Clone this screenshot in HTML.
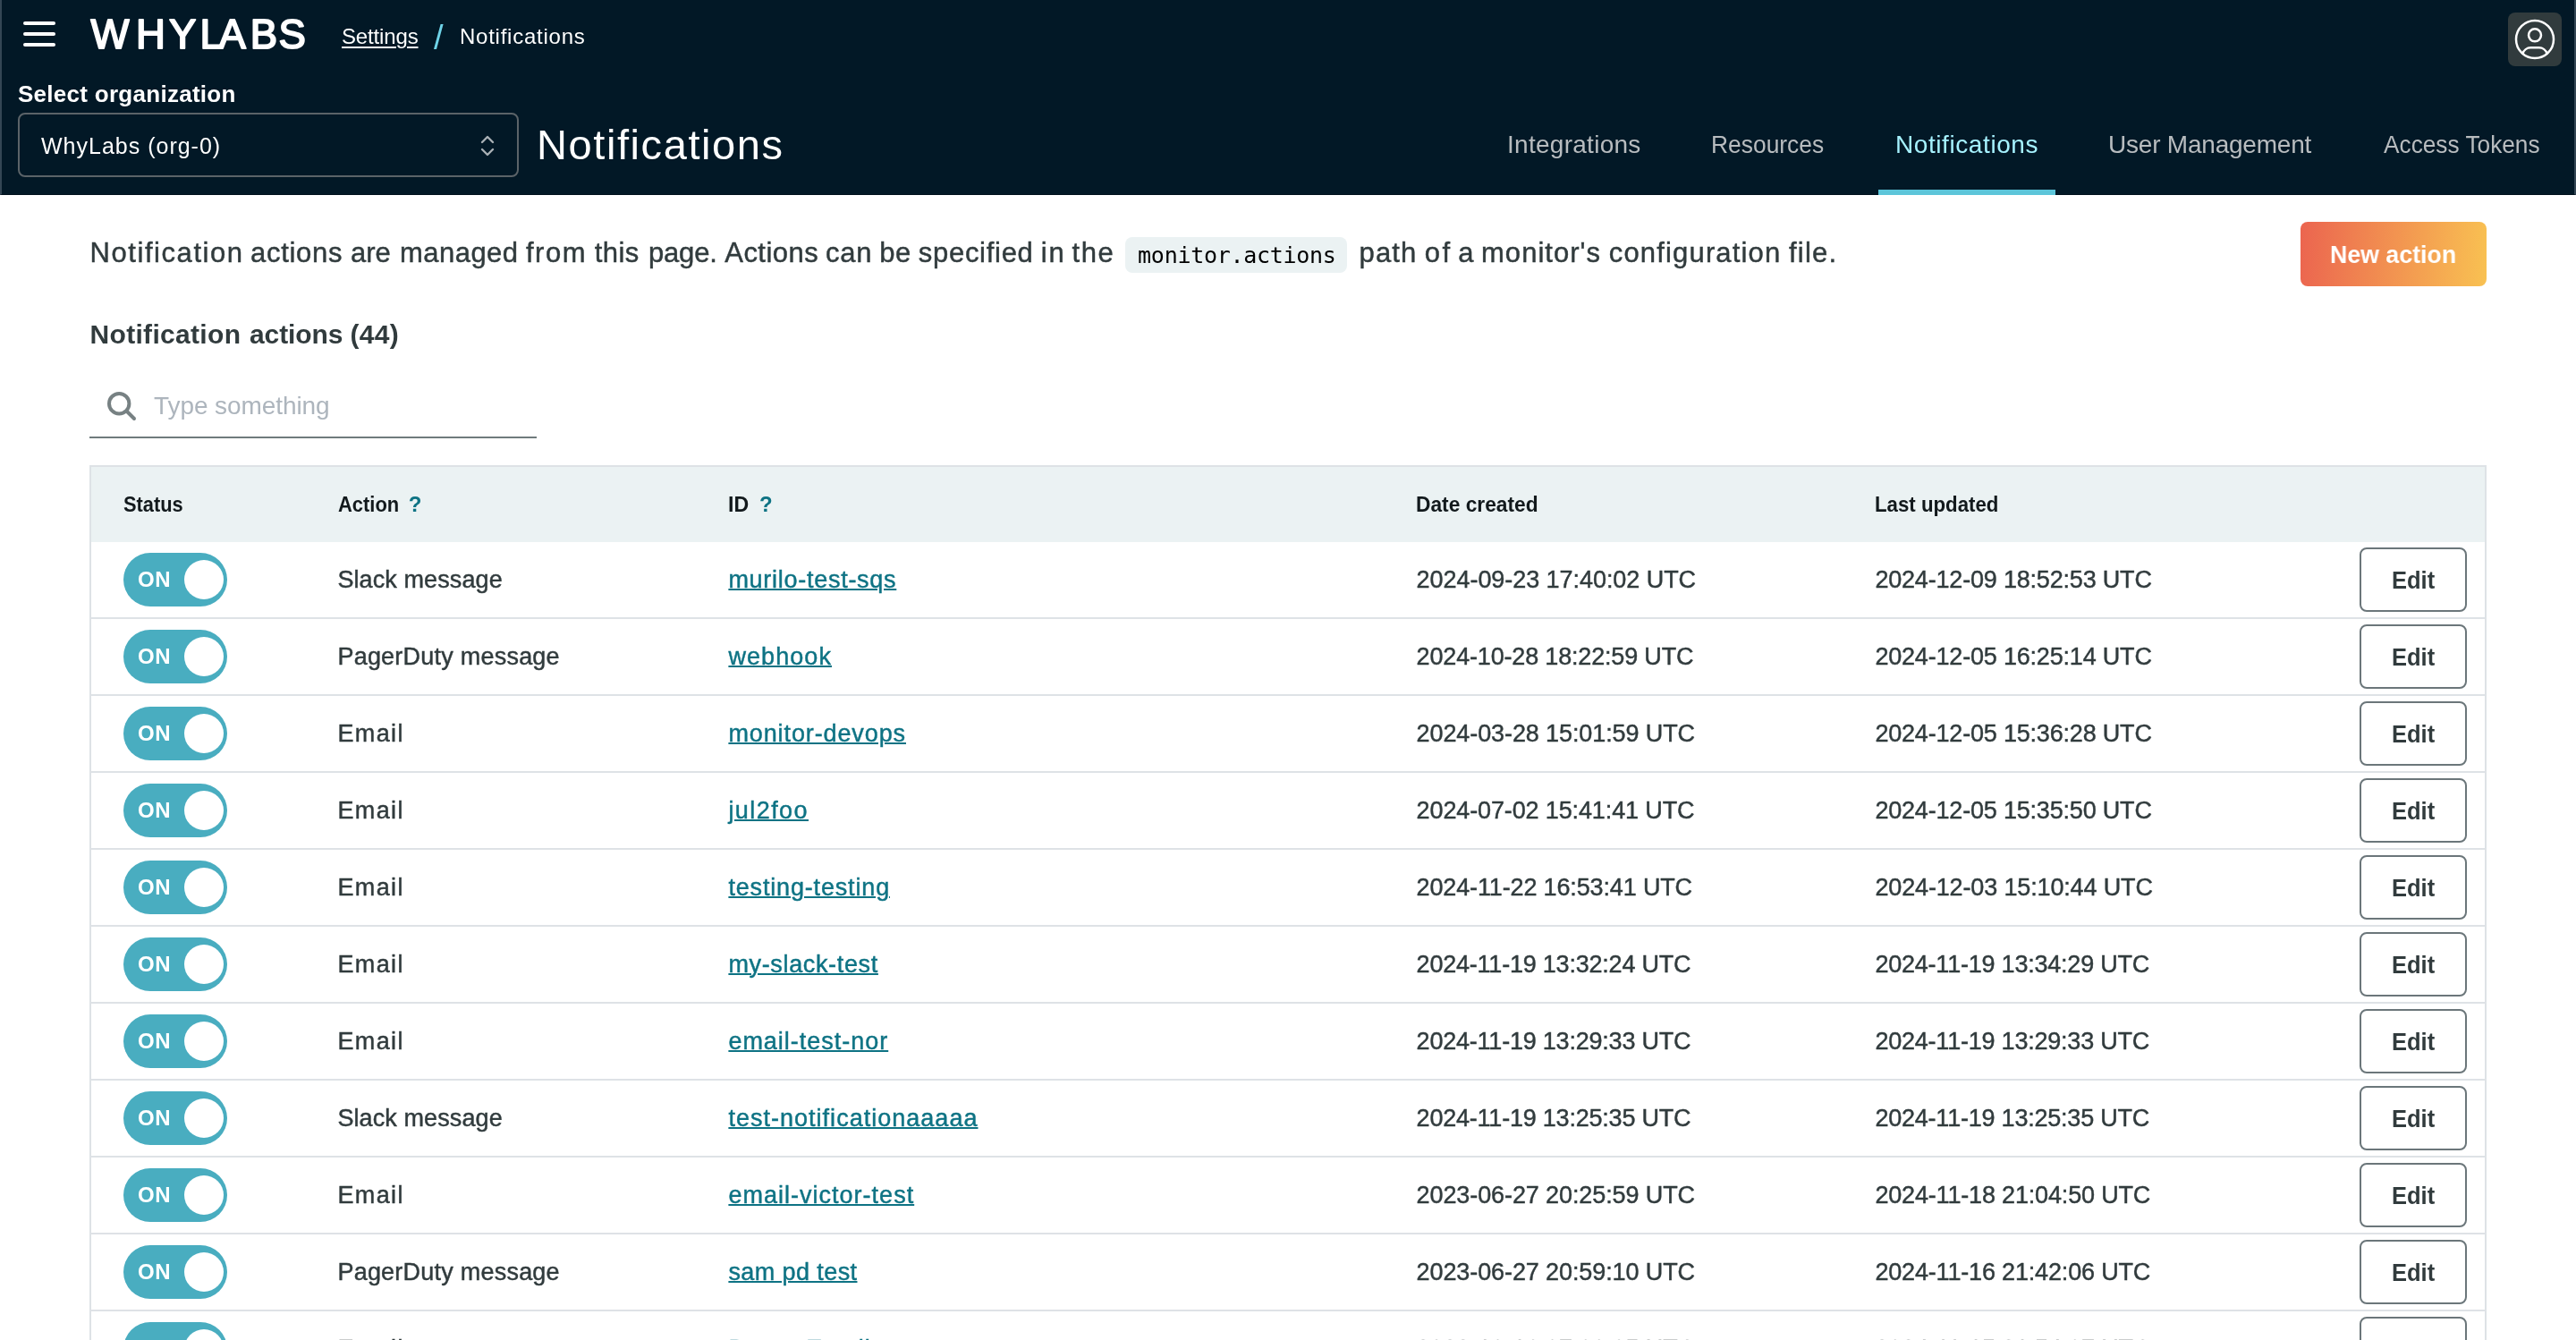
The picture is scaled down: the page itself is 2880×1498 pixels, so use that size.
<!DOCTYPE html><html lang="en"><head><meta charset="utf-8"><title>Notifications | WhyLabs</title><style>
*{box-sizing:border-box}
html,body{margin:0;padding:0}
body{will-change:transform;width:2880px;height:1498px;overflow:hidden;background:#fff;font-family:"Liberation Sans",Arial,sans-serif;color:#313b3d;position:relative}
a{color:inherit}
.abs{position:absolute;white-space:nowrap}
header{position:absolute;left:0;top:0;width:2880px;height:218px;background:#021826;border-left:2px solid #344654;border-right:2px solid #344654;border-bottom:1px solid #000f1c}
header .in{position:absolute;left:-2px;top:0;width:2880px;height:218px}
.burger{position:absolute;left:26px;top:24px;width:36px;height:28px}
.burger i{position:absolute;left:0;width:36px;height:4px;border-radius:2px;background:#fff}
.logo{position:absolute;left:90px;top:10px;width:260px;height:56px}
.crumb{font-size:24px;color:#fff;line-height:30px;top:26px}
.crumb.sep{color:#6fd3e8;font-size:38px;line-height:40px;top:22px}
.orglabel{left:20px;top:89px;font-size:26px;font-weight:700;color:#fff;line-height:32px}
.select{position:absolute;left:20px;top:126px;width:560px;height:72px;border:2px solid #5b6368;border-radius:8px}
.select span{position:absolute;left:24px;top:1px;line-height:68px;font-size:25px;color:#fff;white-space:nowrap}
.select svg{position:absolute;right:24px;top:22px}
h1{margin:0;font-weight:400;font-size:47px;color:#fff;left:600px;top:132px;line-height:60px}
nav a{position:absolute;top:144px;font-size:28px;line-height:36px;color:#b8bcbf;text-decoration:none;white-space:nowrap}
nav a.on{color:#a6f2ff}
nav .bar{position:absolute;left:2100px;top:212px;width:198px;height:6px;background:#5cc5d9}
.avatar{position:absolute;left:2804px;top:14px;width:60px;height:60px;border-radius:8px;background:#313b3d}
.avatar svg{position:absolute;left:2px;top:2px}
.lead{left:100px;top:263px;font-size:31px;line-height:40px;margin:0}
.lead code{position:absolute;left:1158px;top:2px;width:248px;height:40px;line-height:42px;text-align:center;border-radius:8px;background:#ebf2f3;color:#000;font-family:"DejaVu Sans Mono","Liberation Mono",monospace;font-size:25px}
.lead{width:2000px;height:40px;-webkit-text-stroke:0.45px}
.lead code,.edit,.sw{-webkit-text-stroke:0}
.w{position:absolute;left:0;top:0}
h2{width:400px;height:40px}
.newbtn{position:absolute;left:2572px;top:248px;width:208px;height:72px;border-radius:8px;background:linear-gradient(94.15deg,#EA5B4F -10.2%,#F9C452 102.94%);color:#fff;font-weight:700;font-size:28px;line-height:73px;text-align:center}
h2{margin:0;left:100px;top:354px;font-size:30px;font-weight:700;line-height:40px}
.search{position:absolute;left:100px;top:418px;width:500px;height:72px;border-bottom:2px solid #6f7b7d}
.search svg{position:absolute;left:18px;top:18px}
.search span{position:absolute;left:70px;top:18px;font-size:28px;line-height:36px;color:#adb5bd;white-space:nowrap}
table{position:absolute;left:100px;top:520px;width:2680px;border-collapse:separate;border-spacing:0;table-layout:fixed;border:2px solid #dee2e6;border-bottom:0}
th{height:84px;background:#ebf2f3;text-align:left;font-size:24px;font-weight:700;color:#12191c;padding:0;white-space:nowrap}
td{height:86px;border-bottom:2px solid #dee2e6;padding:0;font-size:27px;white-space:nowrap;vertical-align:middle;-webkit-text-stroke:0.45px}
th:first-child,td:first-child{padding-left:36px}
th b{color:#0e7384}
td a{color:#0e7384;text-decoration:underline;text-decoration-thickness:2px;text-underline-offset:1px}
.sw{display:block;position:relative;width:116px;height:60px;border-radius:30px;background:#49adc0}
.sw span{position:absolute;left:16px;top:0;line-height:60px;font-size:24px;font-weight:700;color:#fff}
.sw i{position:absolute;left:68px;top:8px;width:44px;height:44px;border-radius:50%;background:#fff}
.edit{display:block;width:120px;height:72px;border:2px solid #6b767a;border-radius:8px;font-size:28px;font-weight:700;line-height:70px;text-align:center;color:#313b3d;background:#fff}
</style></head><body>
<header><div class="in">
<div class="burger"><i style="top:0"></i><i style="top:12px"></i><i style="top:24px"></i></div>
<svg class="logo" viewBox="90 10 260 56"><text x="101.6 152 189.1 223.4 244.6 279.8 311.4" y="53.5" font-family="Liberation Sans, Arial, sans-serif" font-size="45.5" font-weight="400" fill="#fff" stroke="#fff" stroke-width="1.9" stroke-linejoin="round">WHYLABS</text></svg>
<a class="abs crumb" style="left:381px;text-decoration:underline;text-underline-offset:3px;text-decoration-thickness:2px;letter-spacing:-0.154px;margin-left:1px;margin-right:-0.846px">Settings</a>
<span class="abs crumb sep" style="left:485px;letter-spacing:0px;margin-left:0.0px;margin-right:-0.0px">/</span>
<span class="abs crumb" style="left:513px;letter-spacing:0.75px;margin-left:1.0px;margin-right:-1.75px">Notifications</span>
<label class="abs orglabel" style="letter-spacing:0.278px;margin-left:0.0px;margin-right:-0.278px">Select organization</label>
<div class="select"><span style="letter-spacing:1.0px;margin-left:0.0px;margin-right:-1.0px">WhyLabs (org-0)</span><svg width="18" height="26" viewBox="0 0 18 26" fill="none" stroke="#a9b0b5" stroke-width="2.4" stroke-linecap="round" stroke-linejoin="round"><path d="M3 9l6-6 6 6M3 17l6 6 6-6"/></svg></div>
<h1 class="abs" style="letter-spacing:1.583px;margin-left:0.0px;margin-right:-1.583px">Notifications</h1>
<nav>
<a style="left:1686px;letter-spacing:0.273px;margin-left:-1.0px;margin-right:0.727px">Integrations</a>
<a style="left:1914px;letter-spacing:0px;margin-left:-1.0px;margin-right:1.0px;display:inline-block;transform:scaleX(0.9428);transform-origin:0 50%">Resources</a>
<a class="on" style="left:2119px;letter-spacing:0.583px;margin-left:0.0px;margin-right:-0.583px">Notifications</a>
<a style="left:2357px;letter-spacing:-0.214px;margin-left:0.0px;margin-right:0.214px">User Management</a>
<a style="left:2665px;letter-spacing:0px;margin-left:0.0px;margin-right:-0.0px;display:inline-block;transform:scaleX(0.9375);transform-origin:0 50%">Access Tokens</a>
<div class="bar"></div>
</nav>
<div class="avatar"><svg width="56" height="56" viewBox="0 0 24 24" fill="none" stroke="#fff" stroke-width="1.07" stroke-linecap="round" stroke-linejoin="round"><circle cx="12" cy="12" r="9"/><circle cx="12" cy="10" r="3"/><path d="M6.168 18.849a4 4 0 0 1 3.832 -2.849h4a4 4 0 0 1 3.834 2.855"/></svg></div>
</div></header>
<main>
<p class="abs lead"><span class="w" style="letter-spacing:1.568px;margin-left:0.5px;margin-right:-2.068px">Notification</span> <span class="w" style="letter-spacing:0.708px;margin-left:180.0px;margin-right:-180.708px">actions</span> <span class="w" style="letter-spacing:0.0px;margin-left:292.0px;margin-right:-292.0px">are</span> <span class="w" style="letter-spacing:0.458px;margin-left:347.0px;margin-right:-347.458px">managed</span> <span class="w" style="letter-spacing:1.5px;margin-left:488.0px;margin-right:-489.5px">from</span> <span class="w" style="letter-spacing:0.417px;margin-left:564.75px;margin-right:-565.167px">this</span> <span class="w" style="letter-spacing:-0.188px;margin-left:625.0px;margin-right:-624.812px">page.</span> <span class="w" style="letter-spacing:0.458px;margin-left:710.25px;margin-right:-710.708px">Actions</span> <span class="w" style="letter-spacing:0.75px;margin-left:823.0px;margin-right:-823.75px">can</span> <span class="w" style="letter-spacing:0.5px;margin-left:883.25px;margin-right:-883.75px">be</span> <span class="w" style="letter-spacing:0.719px;margin-left:926.75px;margin-right:-927.469px">specified</span> <span class="w" style="letter-spacing:1.75px;margin-left:1063.75px;margin-right:-1065.5px">in</span> <span class="w" style="letter-spacing:1.625px;margin-left:1098.5px;margin-right:-1100.125px">the</span> <code><span style="letter-spacing:-0.286px;margin-left:1.0px;margin-right:-0.714px">monitor.actions</span></code> <span class="w" style="letter-spacing:1.167px;margin-left:1419.5px;margin-right:-1420.667px">path</span> <span class="w" style="letter-spacing:2.5px;margin-left:1492.75px;margin-right:-1495.25px">of</span> <span class="w" style="letter-spacing:0px;margin-left:1530.25px;margin-right:-1530.25px">a</span> <span class="w" style="letter-spacing:1.031px;margin-left:1556.0px;margin-right:-1557.031px">monitor's</span> <span class="w" style="letter-spacing:1.167px;margin-left:1698.75px;margin-right:-1699.917px">configuration</span> <span class="w" style="letter-spacing:1.188px;margin-left:1900.0px;margin-right:-1901.188px">file.</span></p>
<div class="newbtn"><span style="letter-spacing:0px;margin-left:3.2px;margin-right:-3.2px;display:inline-block;transform:scaleX(0.9549);transform-origin:0 50%">New action</span></div>
<h2 class="abs"><span class="w" style="letter-spacing:0.318px;margin-left:0.5px;margin-right:-0.818px">Notification</span> <span class="w" style="letter-spacing:-0.083px;margin-left:179.0px;margin-right:-178.917px">actions</span> <span class="w" style="letter-spacing:0.333px;margin-left:291.5px;margin-right:-291.833px">(44)</span></h2>
<div class="search"><svg width="36" height="36" viewBox="0 0 36 36" fill="none" stroke="#778183" stroke-width="4" stroke-linecap="round"><circle cx="15.2" cy="15.2" r="11.2"/><path d="M23.5 23.5L32 32"/></svg><span style="letter-spacing:-0.077px;margin-left:2.0px;margin-right:-1.923px">Type something</span></div>
<table><colgroup><col style="width:276px"><col style="width:436px"><col style="width:770px"><col style="width:512px"><col style="width:542px"><col style="width:140px"></colgroup>
<thead><tr><th><span style="letter-spacing:0px;margin-left:0.0px;margin-right:-0.0px;display:inline-block;transform:scaleX(0.91);transform-origin:0 50%">Status</span></th><th><span style="letter-spacing:0px;margin-left:0.0px;margin-right:-0.0px;display:inline-block;transform:scaleX(0.9136);transform-origin:0 50%">Action</span><b style="letter-spacing:0px;margin-left:4.0px;margin-right:-4.0px">?</b></th><th><span style="letter-spacing:0px;margin-left:0.0px;margin-right:-0.0px;display:inline-block;transform:scaleX(0.9638);transform-origin:0 50%">ID</span><b style="letter-spacing:0px;margin-left:11.0px;margin-right:-11.0px">?</b></th><th><span style="letter-spacing:0px;margin-left:-1.0px;margin-right:1.0px;display:inline-block;transform:scaleX(0.9481);transform-origin:0 50%">Date created</span></th><th><span style="letter-spacing:0px;margin-left:0.0px;margin-right:-0.0px;display:inline-block;transform:scaleX(0.9269);transform-origin:0 50%">Last updated</span></th><th></th></tr></thead><tbody>
<tr><td><span class="sw"><span style="letter-spacing:0.6px;margin-left:0.0px;margin-right:-0.6px">ON</span><i></i></span></td><td><span style="letter-spacing:0.1px;margin-left:-0.6px;margin-right:0.5px">Slack message</span></td><td><a style="letter-spacing:0.724px;margin-left:0.4px;margin-right:-1.124px">murilo-test-sqs</a></td><td><span style="letter-spacing:-0.055px;margin-left:-0.4px;margin-right:0.455px">2024-09-23 17:40:02 UTC</span></td><td><span style="letter-spacing:-0.191px;margin-left:0.4px;margin-right:-0.209px">2024-12-09 18:52:53 UTC</span></td><td><span class="edit"><span style="letter-spacing:0px;margin-left:2.6px;margin-right:-2.6px;display:inline-block;transform:scaleX(0.911);transform-origin:0 50%">Edit</span></span></td></tr>
<tr><td><span class="sw"><span style="letter-spacing:0.6px;margin-left:0.0px;margin-right:-0.6px">ON</span><i></i></span></td><td><span style="letter-spacing:0.225px;margin-left:-0.6px;margin-right:0.375px">PagerDuty message</span></td><td><a style="letter-spacing:1.073px;margin-left:0.4px;margin-right:-1.473px">webhook</a></td><td><span style="letter-spacing:-0.173px;margin-left:-0.4px;margin-right:0.573px">2024-10-28 18:22:59 UTC</span></td><td><span style="letter-spacing:-0.191px;margin-left:0.4px;margin-right:-0.209px">2024-12-05 16:25:14 UTC</span></td><td><span class="edit"><span style="letter-spacing:0px;margin-left:2.6px;margin-right:-2.6px;display:inline-block;transform:scaleX(0.911);transform-origin:0 50%">Edit</span></span></td></tr>
<tr><td><span class="sw"><span style="letter-spacing:0.6px;margin-left:0.0px;margin-right:-0.6px">ON</span><i></i></span></td><td><span style="letter-spacing:1.4px;margin-left:-0.6px;margin-right:-0.8px">Email</span></td><td><a style="letter-spacing:0.893px;margin-left:0.4px;margin-right:-1.293px">monitor-devops</a></td><td><span style="letter-spacing:-0.1px;margin-left:-0.4px;margin-right:0.5px">2024-03-28 15:01:59 UTC</span></td><td><span style="letter-spacing:-0.191px;margin-left:0.4px;margin-right:-0.209px">2024-12-05 15:36:28 UTC</span></td><td><span class="edit"><span style="letter-spacing:0px;margin-left:2.6px;margin-right:-2.6px;display:inline-block;transform:scaleX(0.911);transform-origin:0 50%">Edit</span></span></td></tr>
<tr><td><span class="sw"><span style="letter-spacing:0.6px;margin-left:0.0px;margin-right:-0.6px">ON</span><i></i></span></td><td><span style="letter-spacing:1.4px;margin-left:-0.6px;margin-right:-0.8px">Email</span></td><td><a style="letter-spacing:1.433px;margin-left:0.4px;margin-right:-1.833px">jul2foo</a></td><td><span style="letter-spacing:-0.127px;margin-left:-0.4px;margin-right:0.527px">2024-07-02 15:41:41 UTC</span></td><td><span style="letter-spacing:-0.191px;margin-left:0.4px;margin-right:-0.209px">2024-12-05 15:35:50 UTC</span></td><td><span class="edit"><span style="letter-spacing:0px;margin-left:2.6px;margin-right:-2.6px;display:inline-block;transform:scaleX(0.911);transform-origin:0 50%">Edit</span></span></td></tr>
<tr><td><span class="sw"><span style="letter-spacing:0.6px;margin-left:0.0px;margin-right:-0.6px">ON</span><i></i></span></td><td><span style="letter-spacing:1.4px;margin-left:-0.6px;margin-right:-0.8px">Email</span></td><td><a style="letter-spacing:0.834px;margin-left:0.4px;margin-right:-1.234px">testing-testing</a></td><td><span style="letter-spacing:-0.145px;margin-left:-0.4px;margin-right:0.545px">2024-11-22 16:53:41 UTC</span></td><td><span style="letter-spacing:-0.145px;margin-left:0.4px;margin-right:-0.255px">2024-12-03 15:10:44 UTC</span></td><td><span class="edit"><span style="letter-spacing:0px;margin-left:2.6px;margin-right:-2.6px;display:inline-block;transform:scaleX(0.911);transform-origin:0 50%">Edit</span></span></td></tr>
<tr><td><span class="sw"><span style="letter-spacing:0.6px;margin-left:0.0px;margin-right:-0.6px">ON</span><i></i></span></td><td><span style="letter-spacing:1.4px;margin-left:-0.6px;margin-right:-0.8px">Email</span></td><td><a style="letter-spacing:0.654px;margin-left:0.4px;margin-right:-1.054px">my-slack-test</a></td><td><span style="letter-spacing:-0.218px;margin-left:-0.4px;margin-right:0.618px">2024-11-19 13:32:24 UTC</span></td><td><span style="letter-spacing:-0.218px;margin-left:0.4px;margin-right:-0.182px">2024-11-19 13:34:29 UTC</span></td><td><span class="edit"><span style="letter-spacing:0px;margin-left:2.6px;margin-right:-2.6px;display:inline-block;transform:scaleX(0.911);transform-origin:0 50%">Edit</span></span></td></tr>
<tr><td><span class="sw"><span style="letter-spacing:0.6px;margin-left:0.0px;margin-right:-0.6px">ON</span><i></i></span></td><td><span style="letter-spacing:1.4px;margin-left:-0.6px;margin-right:-0.8px">Email</span></td><td><a style="letter-spacing:0.983px;margin-left:0.4px;margin-right:-1.383px">email-test-nor</a></td><td><span style="letter-spacing:-0.218px;margin-left:-0.4px;margin-right:0.618px">2024-11-19 13:29:33 UTC</span></td><td><span style="letter-spacing:-0.218px;margin-left:0.4px;margin-right:-0.182px">2024-11-19 13:29:33 UTC</span></td><td><span class="edit"><span style="letter-spacing:0px;margin-left:2.6px;margin-right:-2.6px;display:inline-block;transform:scaleX(0.911);transform-origin:0 50%">Edit</span></span></td></tr>
<tr><td><span class="sw"><span style="letter-spacing:0.6px;margin-left:0.0px;margin-right:-0.6px">ON</span><i></i></span></td><td><span style="letter-spacing:0.1px;margin-left:-0.6px;margin-right:0.5px">Slack message</span></td><td><a style="letter-spacing:1.019px;margin-left:0.4px;margin-right:-1.419px">test-notificationaaaaa</a></td><td><span style="letter-spacing:-0.218px;margin-left:-0.4px;margin-right:0.618px">2024-11-19 13:25:35 UTC</span></td><td><span style="letter-spacing:-0.218px;margin-left:0.4px;margin-right:-0.182px">2024-11-19 13:25:35 UTC</span></td><td><span class="edit"><span style="letter-spacing:0px;margin-left:2.6px;margin-right:-2.6px;display:inline-block;transform:scaleX(0.911);transform-origin:0 50%">Edit</span></span></td></tr>
<tr><td><span class="sw"><span style="letter-spacing:0.6px;margin-left:0.0px;margin-right:-0.6px">ON</span><i></i></span></td><td><span style="letter-spacing:1.4px;margin-left:-0.6px;margin-right:-0.8px">Email</span></td><td><a style="letter-spacing:1.015px;margin-left:0.4px;margin-right:-1.415px">email-victor-test</a></td><td><span style="letter-spacing:-0.1px;margin-left:-0.4px;margin-right:0.5px">2023-06-27 20:25:59 UTC</span></td><td><span style="letter-spacing:-0.173px;margin-left:0.4px;margin-right:-0.227px">2024-11-18 21:04:50 UTC</span></td><td><span class="edit"><span style="letter-spacing:0px;margin-left:2.6px;margin-right:-2.6px;display:inline-block;transform:scaleX(0.911);transform-origin:0 50%">Edit</span></span></td></tr>
<tr><td><span class="sw"><span style="letter-spacing:0.6px;margin-left:0.0px;margin-right:-0.6px">ON</span><i></i></span></td><td><span style="letter-spacing:0.225px;margin-left:-0.6px;margin-right:0.375px">PagerDuty message</span></td><td><a style="letter-spacing:0.411px;margin-left:0.4px;margin-right:-0.811px">sam pd test</a></td><td><span style="letter-spacing:-0.1px;margin-left:-0.4px;margin-right:0.5px">2023-06-27 20:59:10 UTC</span></td><td><span style="letter-spacing:-0.173px;margin-left:0.4px;margin-right:-0.227px">2024-11-16 21:42:06 UTC</span></td><td><span class="edit"><span style="letter-spacing:0px;margin-left:2.6px;margin-right:-2.6px;display:inline-block;transform:scaleX(0.911);transform-origin:0 50%">Edit</span></span></td></tr>
<tr><td><span class="sw"><span style="letter-spacing:0.6px;margin-left:0.0px;margin-right:-0.6px">ON</span><i></i></span></td><td><span style="letter-spacing:1.4px;margin-left:-0.6px;margin-right:-0.8px">Email</span></td><td><a style="letter-spacing:0.983px;margin-left:0.4px;margin-right:-1.383px">Bruno-Email</a></td><td><span style="letter-spacing:-0.1px;margin-left:-0.4px;margin-right:0.5px">2023-10-16 07:00:05 UTC</span></td><td><span style="letter-spacing:-0.173px;margin-left:0.4px;margin-right:-0.227px">2024-11-15 21:54:07 UTC</span></td><td><span class="edit"><span style="letter-spacing:0px;margin-left:2.6px;margin-right:-2.6px;display:inline-block;transform:scaleX(0.911);transform-origin:0 50%">Edit</span></span></td></tr>
</tbody></table></main></body></html>
